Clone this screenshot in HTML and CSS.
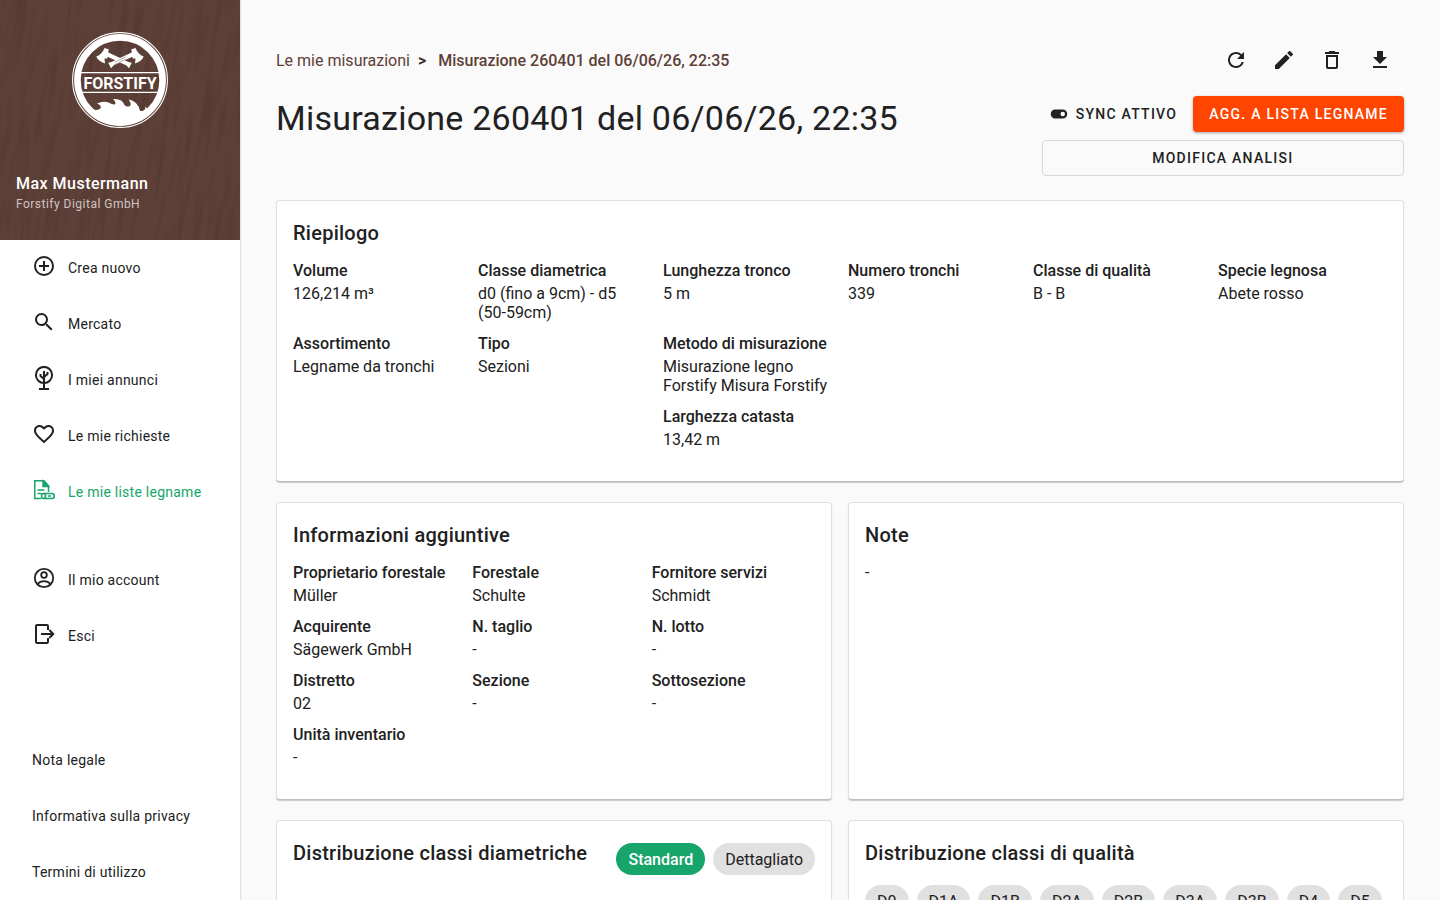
FILE: index.html
```html
<!DOCTYPE html>
<html lang="it">
<head>
    <meta charset="UTF-8">
    <meta name="viewport" content="width=device-width, initial-scale=1.0">
    <title>Forstify - Misurazione 260401</title>
    <link rel="stylesheet" href="styles.css">
</head>
<body>
    <!-- Sidebar -->
    <aside class="sidebar">
        <div class="profile">
            <svg class="wood" aria-hidden="true">
                <defs>
                    <filter id="grain" x="0" y="0" width="100%" height="100%" color-interpolation-filters="sRGB">
                        <feTurbulence type="fractalNoise" baseFrequency="0.16 0.016" numOctaves="2" seed="8"/>
                        <feColorMatrix values="0 0 0 0 0.2  0 0 0 0 0.14  0 0 0 0 0.16  3 0 0 0 -1.4"/>
                    </filter>
                </defs>
                <rect x="-40" y="-40" width="340" height="340" transform="rotate(8 120 120)" filter="url(#grain)"/>
            </svg>
            <svg class="logo" viewBox="0 0 96 96" role="img" aria-label="Forstify">
                <circle cx="48" cy="48" r="47.4" fill="none" stroke="#fff" stroke-width="1.1"/>
                <circle cx="48" cy="48" r="42.6" fill="none" stroke="#fff" stroke-width="6.6"/>
                <path d="M8 40.7h80M8 60.3h80" stroke="#fff" stroke-width="1.2"/>
                <g id="axe" fill="#fff">
                    <path d="M36.500 20.500L56.500 30L59.800 30.800L57 36.300L54.500 33.500L35 24.500z"/>
                    <path d="M32.500 16L37 17.500L36 20L37.500 21.500L35 26.500L32.500 26.500L33 31.500Q26.500 29.500 24.300 24.500Q30 22.500 32.500 16z"/>
                </g>
                <use href="#axe" transform="translate(96 0) scale(-1 1)"/>
                <path d="M42.500 30.200L54 24.800M42 32.800L54 27.200" stroke="#5b4037" stroke-width=".4"/>
                <text class="logo-text" x="48" y="56.500" text-anchor="middle">FORSTIFY</text>
                <path fill="#fff" d="M15 76Q23 80 28.500 76.500Q30 73.500 25 71.500Q31 68.500 36.500 70.500Q43 74 43.500 71.500Q43.500 69 41 67Q50 66 52.500 73Q54.500 75.500 58 74Q60 72 56.500 67.500Q66 69 68 79Q70.500 79.500 73 77.500L73.500 74.500L76 78L82 74L80 80Q68 91 48 91Q27 91 15 76z"/>
            </svg>
            <div class="user">
                <div class="user-name">Max Mustermann</div>
                <div class="user-company">Forstify Digital GmbH</div>
            </div>
        </div>

        <nav class="menu">
            <a href="#">
                <svg class="icon" viewBox="0 0 24 24"><path d="M12 20c-4.410 0-8-3.590-8-8s3.590-8 8-8 8 3.590 8 8-3.590 8-8 8m0-18A10 10 0 0 0 2 12a10 10 0 0 0 10 10 10 10 0 0 0 10-10A10 10 0 0 0 12 2m1 5h-2v4H7v2h4v4h2v-4h4v-2h-4V7z"/></svg>
                Crea nuovo
            </a>
            <a href="#">
                <svg class="icon" viewBox="0 0 24 24"><path d="M15.500 14h-.79l-.28-.27A6.470 6.470 0 0 0 16 9.500 6.500 6.500 0 1 0 9.500 16c1.610 0 3.090-.59 4.230-1.570l.27.28v.79l5 4.990L20.490 19l-4.990-5zm-6 0C7.010 14 5 11.990 5 9.500S7.010 5 9.500 5 14 7.010 14 9.500 11.990 14 9.500 14z"/></svg>
                Mercato
            </a>
            <a href="#">
                <svg class="icon line" viewBox="0 0 24 24"><circle cx="12" cy="9" r="8.100"/><path d="M12 5v18M7 23h10M12 13L8.500 10V8M12 11l3.500-3V6"/></svg>
                I miei annunci
            </a>
            <a href="#">
                <svg class="icon" viewBox="0 0 24 24"><path d="M16.500 3c-1.740 0-3.410.81-4.500 2.090C10.910 3.810 9.240 3 7.500 3 4.420 3 2 5.420 2 8.500c0 3.780 3.400 6.860 8.550 11.540L12 21.350l1.450-1.320C18.600 15.360 22 12.280 22 8.500 22 5.420 19.580 3 16.500 3zm-4.400 15.550l-.1.1-.1-.1C7.140 14.240 4 11.390 4 8.500 4 6.500 5.500 5 7.500 5c1.540 0 3.040.99 3.570 2.360h1.870C13.460 5.990 14.960 5 16.500 5c2 0 3.500 1.500 3.500 3.500 0 2.890-3.140 5.740-7.900 10.050z"/></svg>
                Le mie richieste
            </a>
            <a href="#" class="active">
                <svg class="icon list-icon" viewBox="0 0 24 24"><path d="M9 20.500H2.800V2.800H12l4.500 5V14"/><path d="M11 3v5.500h5.500L11 3z" fill="currentColor"/><path d="M5.500 12h7M5.500 15.500h4"/><path d="M11.500 15.500H20c3 0 3 5 0 5h-8.500"/><ellipse cx="11.500" cy="18" rx="2" ry="2.500"/><path d="M16 18h3"/></svg>
                Le mie liste legname
            </a>
        </nav>
        <nav class="menu">
            <a href="#">
                <svg class="icon line thin" viewBox="0 0 24 24"><circle cx="12" cy="12" r="9.200"/><circle cx="12" cy="9" r="2.800"/><path d="M5.500 18c3.500-3.800 9.500-3.800 13 0"/></svg>
                Il mio account
            </a>
            <a href="#">
                <svg class="icon line" viewBox="0 0 24 24"><path d="M16 8V4.200Q16 3 14.800 3H5.200Q4 3 4 4.200v15.600Q4 21 5.200 21h9.600q1.200 0 1.200-1.200V16M9 12h12M17.300 8l4 4-4 4"/></svg>
                Esci
            </a>
        </nav>
        <nav class="menu legal">
            <a href="#">Nota legale</a>
            <a href="#">Informativa sulla privacy</a>
            <a href="#">Termini di utilizzo</a>
        </nav>
    </aside>

    <main>
        <div class="topbar">
            <div class="breadcrumb">
                <a href="#">Le mie misurazioni</a>
                <span class="sep">&gt;</span>
                <strong>Misurazione 260401 del 06/06/26, 22:35</strong>
            </div>
            <div class="tools">
                <button aria-label="Aggiorna"><svg class="icon" viewBox="0 0 24 24"><path d="M17.650 6.350A7.958 7.958 0 0 0 12 4c-4.420 0-7.990 3.580-7.990 8s3.570 8 7.990 8c3.730 0 6.840-2.550 7.730-6h-2.080A5.990 5.990 0 0 1 12 18c-3.310 0-6-2.690-6-6s2.690-6 6-6c1.660 0 3.140.69 4.220 1.780L13 11h7V4l-2.350 2.350z"/></svg></button>
                <button aria-label="Modifica"><svg class="icon" viewBox="0 0 24 24"><path d="M3 17.250V21h3.750L17.810 9.940l-3.750-3.750L3 17.250zM20.710 7.040a.996.996 0 0 0 0-1.410l-2.340-2.340a.996.996 0 0 0-1.410 0l-1.830 1.830 3.750 3.750 1.830-1.830z"/></svg></button>
                <button aria-label="Elimina"><svg class="icon" viewBox="0 0 24 24"><path d="M6 19c0 1.100.9 2 2 2h8c1.100 0 2-.9 2-2V7H6v12zM8 9h8v10H8V9zm7.500-5l-1-1h-5l-1 1H5v2h14V4h-3.500z"/></svg></button>
                <button aria-label="Scarica"><svg class="icon" viewBox="0 0 24 24"><path d="M5 20h14v-2H5v2zM19 9h-4V3H9v6H5l7 7 7-7z"/></svg></button>
            </div>
        </div>

        <div class="heading">
            <h1>Misurazione 260401 del 06/06/26, 22:35</h1>
            <div class="actions">
                <button class="btn btn-text">
                    <svg viewBox="0 0 24 24"><path d="M17 6H7c-3.310 0-6 2.690-6 6s2.690 6 6 6h10c3.310 0 6-2.690 6-6s-2.690-6-6-6zm0 9a3 3 0 1 1 0-6 3 3 0 0 1 0 6z"/></svg>
                    SYNC ATTIVO
                </button>
                <button class="btn btn-primary">AGG. A LISTA LEGNAME</button>
                <button class="btn btn-outline">MODIFICA ANALISI</button>
            </div>
        </div>

        <!-- Riepilogo -->
        <section class="card">
            <h2>Riepilogo</h2>
            <dl class="data six">
                <div><dt>Volume</dt><dd>126,214 m³</dd></div>
                <div><dt>Classe diametrica</dt><dd>d0 (fino a 9cm) - d5 (50-59cm)</dd></div>
                <div><dt>Lunghezza tronco</dt><dd>5 m</dd></div>
                <div><dt>Numero tronchi</dt><dd>339</dd></div>
                <div><dt>Classe di qualità</dt><dd>B - B</dd></div>
                <div><dt>Specie legnosa</dt><dd>Abete rosso</dd></div>
                <div><dt>Assortimento</dt><dd>Legname da tronchi</dd></div>
                <div><dt>Tipo</dt><dd>Sezioni</dd></div>
                <div><dt>Metodo di misurazione</dt><dd>Misurazione legno Forstify Misura Forstify</dd></div>
                <div class="third"><dt>Larghezza catasta</dt><dd>13,42 m</dd></div>
            </dl>
        </section>

        <div class="cards">
            <section class="card">
                <h2>Informazioni aggiuntive</h2>
                <dl class="data three">
                    <div><dt>Proprietario forestale</dt><dd>Müller</dd></div>
                    <div><dt>Forestale</dt><dd>Schulte</dd></div>
                    <div><dt>Fornitore servizi</dt><dd>Schmidt</dd></div>
                    <div><dt>Acquirente</dt><dd>Sägewerk GmbH</dd></div>
                    <div><dt>N. taglio</dt><dd>-</dd></div>
                    <div><dt>N. lotto</dt><dd>-</dd></div>
                    <div><dt>Distretto</dt><dd>02</dd></div>
                    <div><dt>Sezione</dt><dd>-</dd></div>
                    <div><dt>Sottosezione</dt><dd>-</dd></div>
                    <div><dt>Unità inventario</dt><dd>-</dd></div>
                </dl>
            </section>
            <section class="card">
                <h2>Note</h2>
                <p>-</p>
            </section>

            <section class="card">
                <div class="card-head">
                    <h2>Distribuzione classi diametriche</h2>
                    <div class="chips">
                        <button class="chip selected">Standard</button>
                        <button class="chip">Dettagliato</button>
                    </div>
                </div>
            </section>
            <section class="card">
                <h2>Distribuzione classi di qualità</h2>
                <div class="chips classes">
                    <button class="chip">D0</button>
                    <button class="chip">D1A</button>
                    <button class="chip">D1B</button>
                    <button class="chip">D2A</button>
                    <button class="chip">D2B</button>
                    <button class="chip">D3A</button>
                    <button class="chip">D3B</button>
                    <button class="chip">D4</button>
                    <button class="chip">D5</button>
                </div>
            </section>
        </div>
    </main>
</body>
</html>
```
FILE: styles.css
```css
* { box-sizing: border-box; }
body { margin: 0; display: flex; height: 100vh; font-family: Roboto, sans-serif; font-size: 16px; line-height: 19px; color: #212121; background: #fafafa; }
h1, h2, p, dl, dd { margin: 0; }
a { color: inherit; text-decoration: none; }
button { font-family: inherit; color: inherit; border: 0; padding: 0; background: none; cursor: pointer; }
.icon { width: 24px; height: 24px; flex: none; fill: currentColor; }
.line { fill: none; stroke: currentColor; stroke-width: 2; }
.thin { stroke-width: 1.8; }
.list-icon { fill: none; stroke: currentColor; stroke-width: 1.5; }

/* sidebar */
.sidebar { width: 240px; flex: none; display: flex; flex-direction: column; background: #fff; box-shadow: 0 0 2px rgba(0, 0, 0, 0.3); }
.profile { position: relative; height: 240px; flex: none; padding: 32px 16px 28px; display: flex; flex-direction: column; justify-content: space-between; background: #5d4037; color: #fff; overflow: hidden; }
.wood { position: absolute; top: 0; left: 0; width: 100%; height: 100%; opacity: 0.18; }
.logo { position: relative; width: 96px; height: 96px; align-self: center; }
.logo-text { font-size: 16px; font-weight: 700; fill: #fff; }
.user { position: relative; letter-spacing: 0.03em; }
.user-name { font-weight: 500; line-height: 24px; }
.user-company { font-size: 12px; line-height: 16px; color: #d0c4c0; }
.menu { margin-bottom: 32px; font-size: 14px; letter-spacing: 0.018em; }
.menu a { display: flex; align-items: center; gap: 12px; height: 56px; padding: 0 32px; }
.menu .icon { margin-bottom: 4px; }
.menu .active { color: #17a56b; }
.legal { margin: auto 0 0; }

/* header */
main { flex: 1; min-width: 0; padding: 36px; overflow-y: auto; scrollbar-width: none; }
.topbar { display: flex; justify-content: space-between; align-items: center; height: 48px; }
.breadcrumb { display: flex; gap: 8px; color: #5d4037; }
.breadcrumb strong { font-weight: 500; margin-left: 4px; }
.sep { font-size: 16px; font-weight: 700; color: #3e2c26; }
.tools { display: flex; }
.tools button { width: 48px; height: 48px; padding: 12px; }
.heading { display: flex; justify-content: space-between; align-items: flex-start; margin: 12px 0 24px; }
h1 { font-size: 34px; font-weight: 400; line-height: 44px; letter-spacing: 0.007em; }
.actions { display: grid; grid-template-columns: auto auto; gap: 8px; }
.btn { display: flex; align-items: center; justify-content: center; height: 36px; padding: 0 16px; border-radius: 4px; font-size: 14px; font-weight: 500; letter-spacing: 0.09em; white-space: nowrap; }
.btn svg { width: 18px; height: 18px; margin-right: 8px; fill: currentColor; }
.btn-text { padding: 0 8px; }
.btn-primary { background: #ff4500; color: #fff; box-shadow: 0 1px 3px rgba(0, 0, 0, 0.35); }
.btn-outline { grid-column: span 2; border: 1px solid #d8d8d8; }

/* cards */
.card { padding: 16px 16px 20px; background: #fff; border: 1px solid #e0e0e0; border-bottom-color: #bdbdbd; border-radius: 4px; box-shadow: 0 1px 1px rgba(0, 0, 0, 0.2); }
.cards { display: grid; grid-template-columns: 1fr 1fr; gap: 20px 16px; margin-top: 20px; }
h2 { margin-bottom: 12px; font-size: 20px; font-weight: 500; line-height: 32px; letter-spacing: 0.0125em; }
.data { display: grid; column-gap: 16px; }
.six { grid-template-columns: repeat(6, 1fr); }
.three { grid-template-columns: repeat(3, 1fr); }
.third { grid-column: 3; }
.data div { margin-bottom: 12px; }
dt { margin-bottom: 4px; font-weight: 500; white-space: nowrap; }
.card-head { display: flex; justify-content: space-between; min-height: 280px; }
.chips { display: flex; gap: 8px; padding-top: 6px; }
.classes { padding-top: 4px; }
.chip { height: 32px; padding: 0 12px; border-radius: 16px; font-size: 16px; background: #e0e0e0; }
.selected { background: #17a56b; color: #fff; font-weight: 500; }
```
